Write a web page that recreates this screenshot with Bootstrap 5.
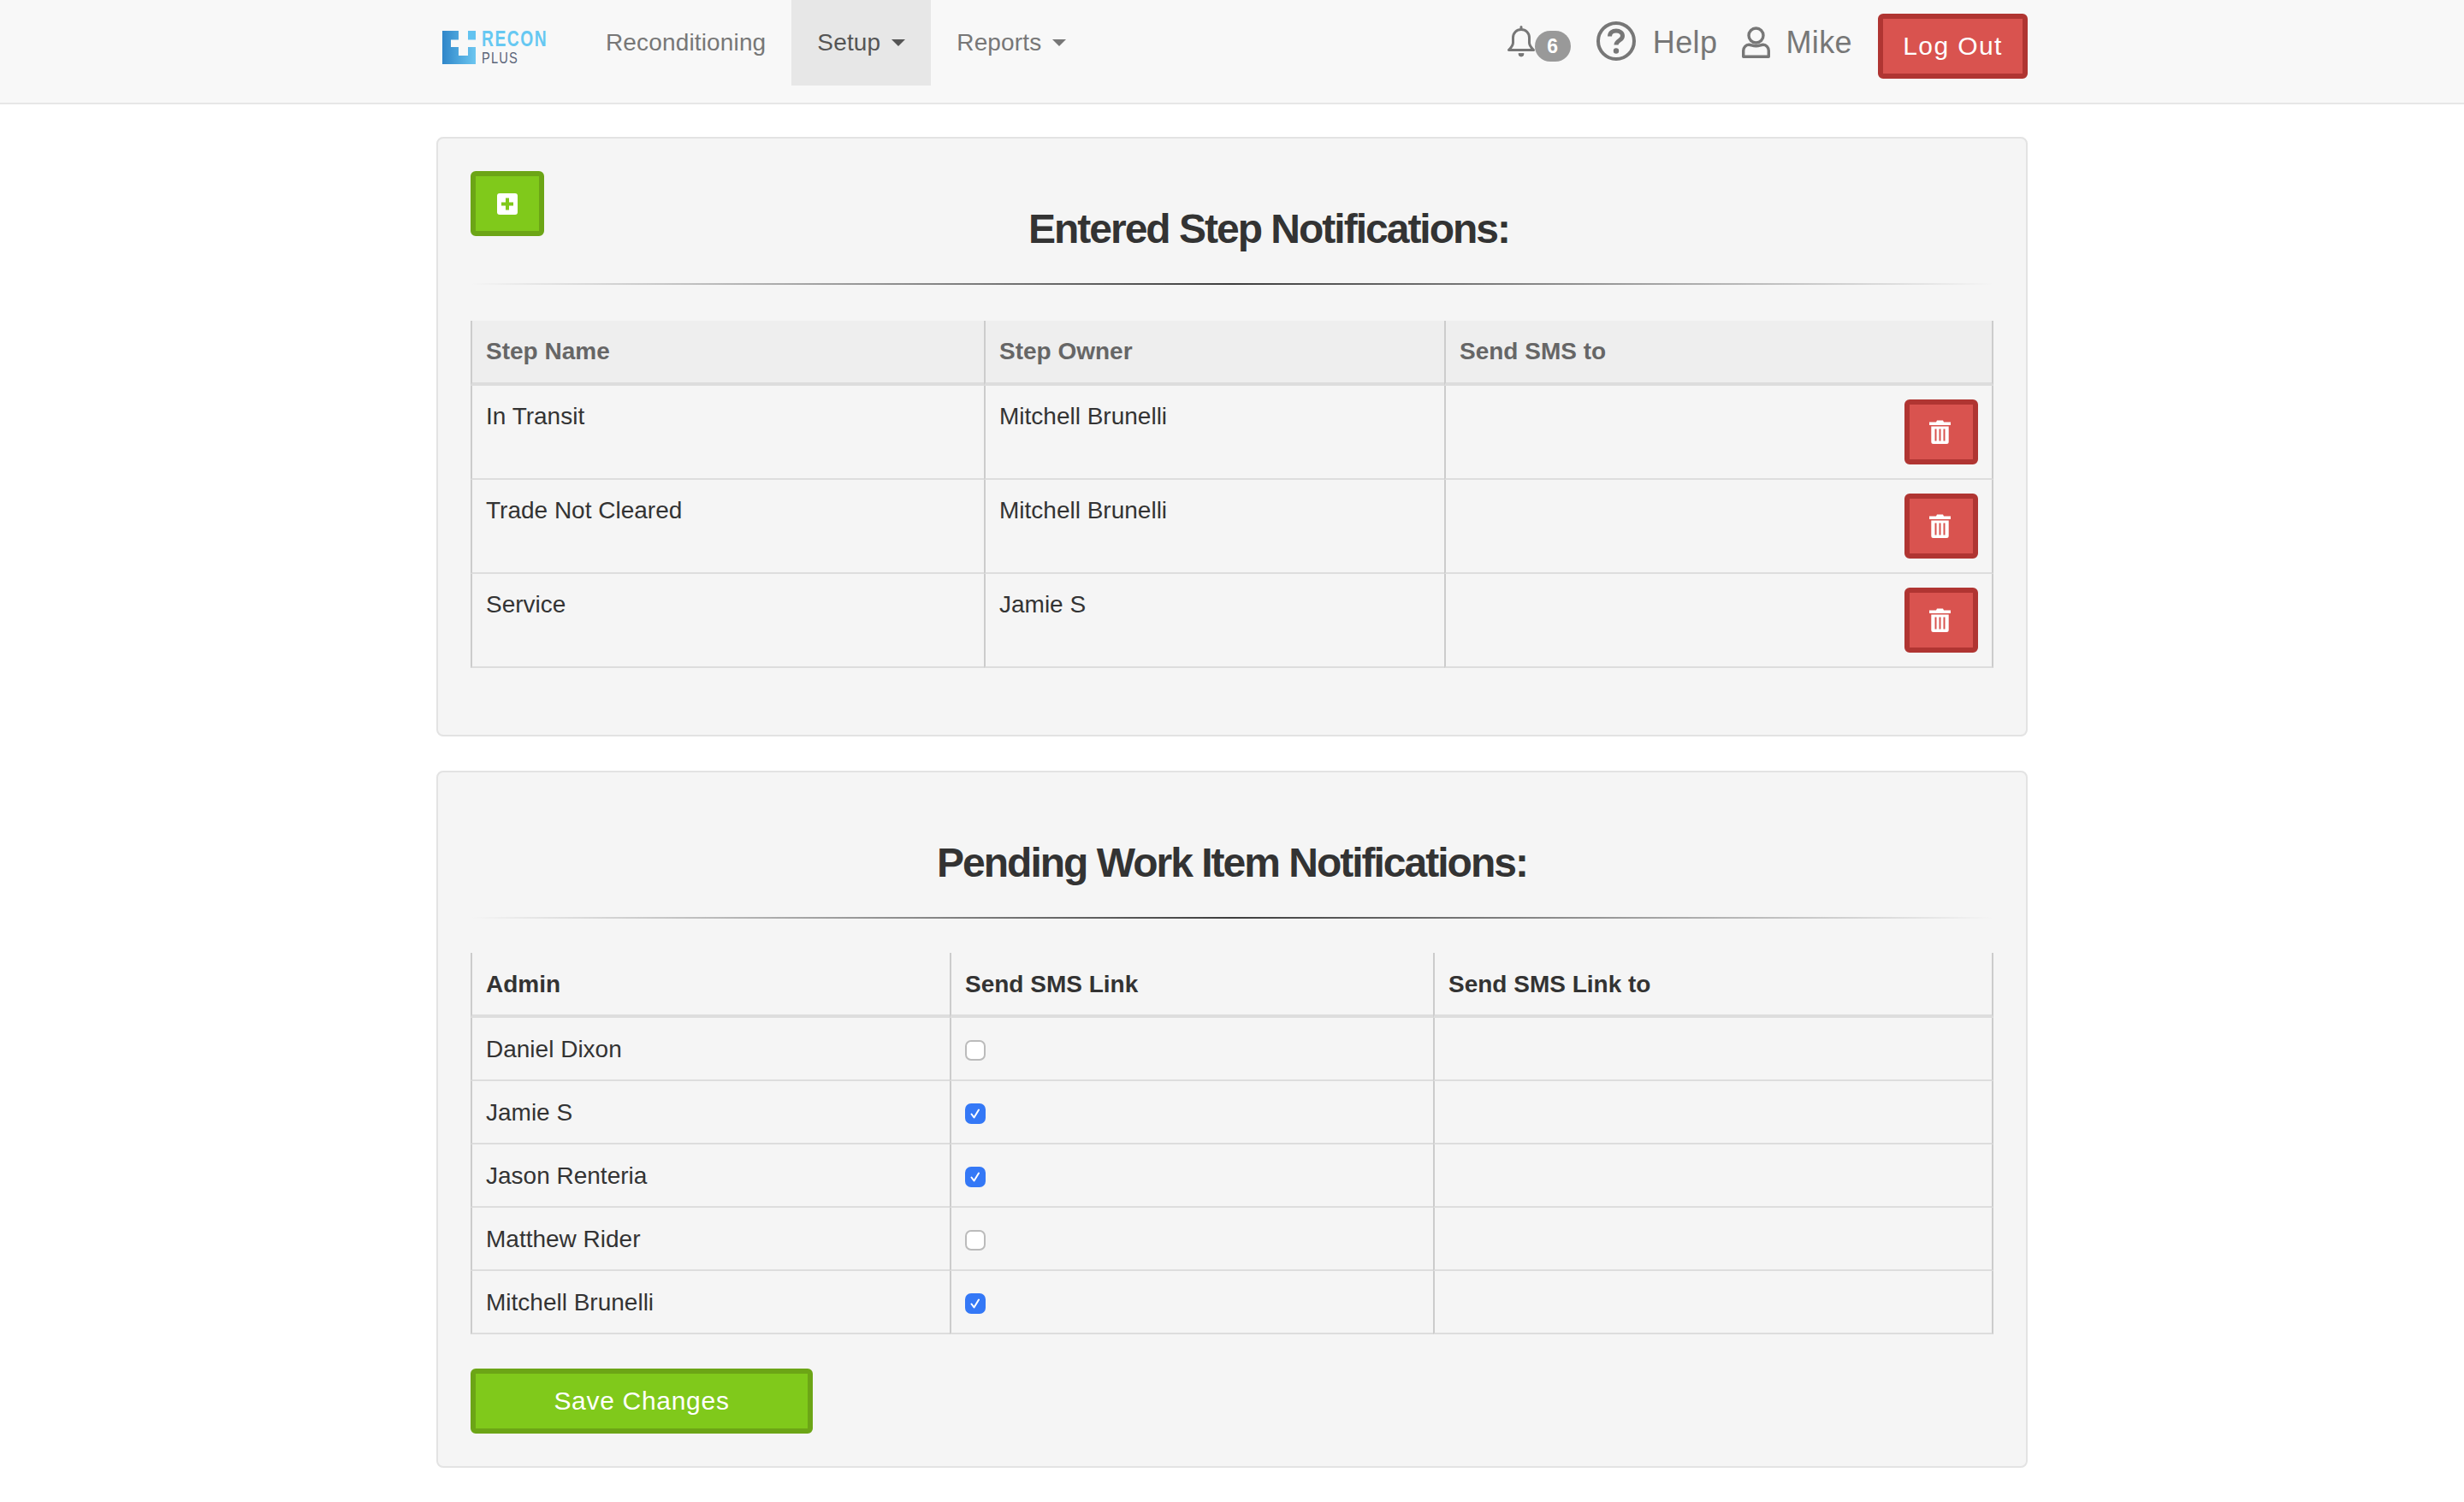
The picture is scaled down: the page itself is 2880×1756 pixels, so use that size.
<!DOCTYPE html>
<html lang="en">
<head>
<meta charset="utf-8">
<title>Notifications</title>
<link href="https://cdn.jsdelivr.net/npm/bootstrap@5.3.0/dist/css/bootstrap.min.css" rel="stylesheet">
<style>
body{font-family:"Liberation Sans",Arial,sans-serif;font-size:28px;line-height:40px;color:#333;background:#fff;}
.topbar{height:122px;background:#f8f8f8;border-bottom:2px solid #e7e7e7;}
.topwrap{width:1860px;margin:0 auto;height:100%;}
.brandmark{width:124px;margin:0 37px 0 7px;height:100px;padding-top:11px;gap:7px;}
.brandtext{line-height:1;transform:scaleX(.77);transform-origin:left center;white-space:nowrap;}
.brand-a{font-size:25px;font-weight:700;letter-spacing:2px;color:#66c8f2;height:18px;line-height:18px;}
.brand-b{font-size:19px;letter-spacing:1.5px;color:#5a6478;height:14px;line-height:14px;margin-top:7px;}
.toplink{display:flex;align-items:center;height:100px;padding:0 30px;color:#777;text-decoration:none;font-size:28px;letter-spacing:.15px;}
.toplink:hover{color:#333;}
.toplink.openitem{background:#e7e7e7;color:#555;}
.caret-mark{display:inline-block;width:0;height:0;margin-left:13px;border-top:8px solid currentColor;border-left:8px solid transparent;border-right:8px solid transparent;}
.rightlink{display:flex;align-items:center;color:#777;text-decoration:none;font-size:36px;letter-spacing:.4px;height:100px;}
.bell-svg{margin-bottom:3px;}
.bell-pill{background:#999;color:#fff;font-size:23px;font-weight:700;letter-spacing:0;line-height:36px;height:36px;width:42px;border-radius:18px;text-align:center;margin-top:8px;}
.help-link{margin-left:30px;}
.help-svg{margin-right:20px;margin-bottom:4px;}
.user-link{margin-left:29px;}
.user-svg{margin-right:18px;margin-bottom:2px;}
.btn-rec{border-width:6px;border-style:solid;border-radius:6px;color:#fff;font-size:30px;letter-spacing:1.4px;padding:0;line-height:64px;height:76px;display:inline-flex;align-items:center;justify-content:center;}
.btn-rec:hover,.btn-rec:active{color:#fff;}
.btn-red{background:#d9534f;border-color:#b03532;}
.btn-red:hover{background:#d9534f;border-color:#b03532;}
.btn-grn{background:#80c91b;border-color:#6ca516;}
.btn-grn:hover{background:#80c91b;border-color:#6ca516;}
.btn-logout{width:175px;margin-left:30px;margin-top:8px;}
.btn-icon{width:86px;}
.btn-icon .trash-svg{margin-right:3px;}
.btn-save{width:400px;letter-spacing:.7px;}
.sheet{width:1860px;margin:0 auto 40px;background:#f5f5f5;border:2px solid #e3e3e3;border-radius:8px;padding:38px;}
.first-sheet{margin-top:38px;}
.sheet-title{font-family:"Liberation Sans",Arial,sans-serif;font-size:48px;font-weight:700;letter-spacing:-2px;line-height:55px;color:#333;text-align:center;margin:40px 0 0;padding:0;}
.fade-rule{height:2px;border:0;margin:36px 0 40px;opacity:1;background:linear-gradient(to right,rgba(0,0,0,0),rgba(0,0,0,.75),rgba(0,0,0,0));clear:both;}
.first-sheet .fade-rule{margin-bottom:42px;}
.grid-tbl{width:100%;table-layout:fixed;border-collapse:separate;border-spacing:0;margin:0 0 40px;font-size:28px;line-height:40px;color:#333;}
.grid-tbl th,.grid-tbl td{padding:16px;vertical-align:top;border-left:2px solid #ccc;background:transparent;}
.grid-tbl th:last-child,.grid-tbl td:last-child{border-right:2px solid #ccc;}
.grid-tbl th{border-bottom:4px solid #ddd;font-weight:700;}
.grid-tbl td{border-bottom:2px solid #ddd;}
.tbl-shaded th{background:#eee;color:#666;}
.tbl-plain th,.tbl-plain td{padding-top:17px;padding-bottom:15px;}
.col-a1{width:600px;}.col-a2{width:538px;}
.col-b1{width:560px;}.col-b2{width:565px;}
.tick{width:24px;height:24px;margin:9px 0 0;border:2px solid #bbb;border-radius:5px;background-color:#fff;display:block;}
.tick:checked{background-color:#3478f6;border-color:#3478f6;background-image:url("data:image/svg+xml,%3csvg xmlns='http://www.w3.org/2000/svg' viewBox='0 0 20 20'%3e%3cpath fill='none' stroke='%23fff' stroke-width='2' stroke-linecap='round' stroke-linejoin='round' d='M5.5 10.5l3 4 5.5-9'/%3e%3c/svg%3e");}
</style>
</head>
<body>
<nav class="topbar">
  <div class="topwrap d-flex align-items-start">
    <a href="#" class="brandmark d-flex align-items-center text-decoration-none">
      <svg width="39" height="39" viewBox="0 0 39 39" class="flex-shrink-0">
        <defs><linearGradient id="lg" x1="0" y1="0" x2="1" y2="0"><stop offset="0" stop-color="#2f86c9"/><stop offset="1" stop-color="#6cc6f0"/></linearGradient></defs>
        <path fill="url(#lg)" d="M0 0H19V10.500H10V19H19V29H30V19H39V39H0Z"/>
        <path fill="#62c3f0" d="M30 0H39V10.500H30Z"/>
      </svg>
      <div class="brandtext">
        <div class="brand-a">RECON</div>
        <div class="brand-b">PLUS</div>
      </div>
    </a>
    <a href="#" class="toplink">Reconditioning</a>
    <a href="#" class="toplink openitem">Setup<span class="caret-mark"></span></a>
    <a href="#" class="toplink">Reports<span class="caret-mark"></span></a>
    <div class="ms-auto d-flex align-items-center">
      <a href="#" class="rightlink">
        <svg class="bell-svg" width="32" height="37" viewBox="0 0 32 37" fill="none" stroke="#777" stroke-width="3" stroke-linejoin="round" stroke-linecap="round"><path d="M16 1.500v3M16 4.500c-5.500 0-9.500 4-9.500 9.500v6c0 3.500-2 5.500-5 8.500h29c-3-3-5-5-5-8.500v-6c0-5.500-4-9.500-9.500-9.500Z"/><path d="M13 33a3 3 0 0 0 6 0Z" fill="#777" stroke-width="1"/></svg>
        <span class="bell-pill">6</span>
      </a>
      <a href="#" class="rightlink help-link">
        <svg class="help-svg" width="46" height="46" viewBox="0 0 46 46" fill="none" stroke="#777"><circle cx="23" cy="23" r="21" stroke-width="4"/><path d="M15.500 17.500c0-4 3.200-6.500 7.500-6.500s7.500 2.500 7.500 6c0 5.500-7.500 5-7.500 10.500" stroke-width="5"/><circle cx="23" cy="34.500" r="3.200" fill="#777" stroke="none"/></svg>
        Help
      </a>
      <a href="#" class="rightlink user-link">
        <svg class="user-svg" width="33" height="37" viewBox="0 0 33 37" fill="none" stroke="#777" stroke-width="3.400" stroke-linejoin="round"><circle cx="16.500" cy="10.500" r="8.500"/><path d="M1.700 35.300v-7c0-4 3-7 6.500-7 2.500 0 4 1.500 8.300 1.500s5.800-1.500 8.300-1.500c3.500 0 6.500 3 6.500 7v7Z"/></svg>
        Mike
      </a>
      <a href="#" class="btn btn-rec btn-red btn-logout">Log Out</a>
    </div>
  </div>
</nav>

<section class="sheet first-sheet">
  <button type="button" class="btn btn-rec btn-grn btn-icon float-start" aria-label="Add">
    <svg width="24" height="25" viewBox="0 0 24 25"><rect width="24" height="25" rx="3" fill="#fff"/><path d="M12 5.500v14M5 12.500h14" stroke="#80c91b" stroke-width="4"/></svg>
  </button>
  <h2 class="sheet-title">Entered Step Notifications:</h2>
  <hr class="fade-rule">
  <table class="grid-tbl tbl-shaded">
    <colgroup><col class="col-a1"><col class="col-a2"><col></colgroup>
    <thead><tr><th>Step Name</th><th>Step Owner</th><th>Send SMS to</th></tr></thead>
    <tbody>
      <tr><td>In Transit</td><td>Mitchell Brunelli</td><td><button type="button" class="btn btn-rec btn-red btn-icon float-end" aria-label="Delete"><svg class="trash-svg" width="25" height="28" viewBox="0 0 25 28"><path fill="#fff" fill-rule="evenodd" d="M0 2.500h8L9 .5h7l1 2h8v3.500H0ZM2.300 7.500h20.400v18a2.500 2.500 0 0 1-2.500 2.500H4.800a2.500 2.500 0 0 1-2.500-2.500ZM6.500 10.500v14h2v-14Zm5 0v14h2v-14Zm5 0v14h2v-14Z"/></svg></button></td></tr>
      <tr><td>Trade Not Cleared</td><td>Mitchell Brunelli</td><td><button type="button" class="btn btn-rec btn-red btn-icon float-end" aria-label="Delete"><svg class="trash-svg" width="25" height="28" viewBox="0 0 25 28"><path fill="#fff" fill-rule="evenodd" d="M0 2.500h8L9 .5h7l1 2h8v3.500H0ZM2.300 7.500h20.400v18a2.500 2.500 0 0 1-2.500 2.500H4.800a2.500 2.500 0 0 1-2.500-2.500ZM6.500 10.500v14h2v-14Zm5 0v14h2v-14Zm5 0v14h2v-14Z"/></svg></button></td></tr>
      <tr><td>Service</td><td>Jamie S</td><td><button type="button" class="btn btn-rec btn-red btn-icon float-end" aria-label="Delete"><svg class="trash-svg" width="25" height="28" viewBox="0 0 25 28"><path fill="#fff" fill-rule="evenodd" d="M0 2.500h8L9 .5h7l1 2h8v3.500H0ZM2.300 7.500h20.400v18a2.500 2.500 0 0 1-2.500 2.500H4.800a2.500 2.500 0 0 1-2.500-2.500ZM6.500 10.500v14h2v-14Zm5 0v14h2v-14Zm5 0v14h2v-14Z"/></svg></button></td></tr>
    </tbody>
  </table>
</section>

<section class="sheet">
  <h2 class="sheet-title">Pending Work Item Notifications:</h2>
  <hr class="fade-rule">
  <table class="grid-tbl tbl-plain">
    <colgroup><col class="col-b1"><col class="col-b2"><col></colgroup>
    <thead><tr><th>Admin</th><th>Send SMS Link</th><th>Send SMS Link to</th></tr></thead>
    <tbody>
      <tr><td>Daniel Dixon</td><td><input class="form-check-input tick" type="checkbox" aria-label="Daniel Dixon"></td><td></td></tr>
      <tr><td>Jamie S</td><td><input class="form-check-input tick" type="checkbox" checked aria-label="Jamie S"></td><td></td></tr>
      <tr><td>Jason Renteria</td><td><input class="form-check-input tick" type="checkbox" checked aria-label="Jason Renteria"></td><td></td></tr>
      <tr><td>Matthew Rider</td><td><input class="form-check-input tick" type="checkbox" aria-label="Matthew Rider"></td><td></td></tr>
      <tr><td>Mitchell Brunelli</td><td><input class="form-check-input tick" type="checkbox" checked aria-label="Mitchell Brunelli"></td><td></td></tr>
    </tbody>
  </table>
  <button type="button" class="btn btn-rec btn-grn btn-save">Save Changes</button>
</section>
<script src="https://cdn.jsdelivr.net/npm/bootstrap@5.3.0/dist/js/bootstrap.bundle.min.js"></script>
</body>
</html>
